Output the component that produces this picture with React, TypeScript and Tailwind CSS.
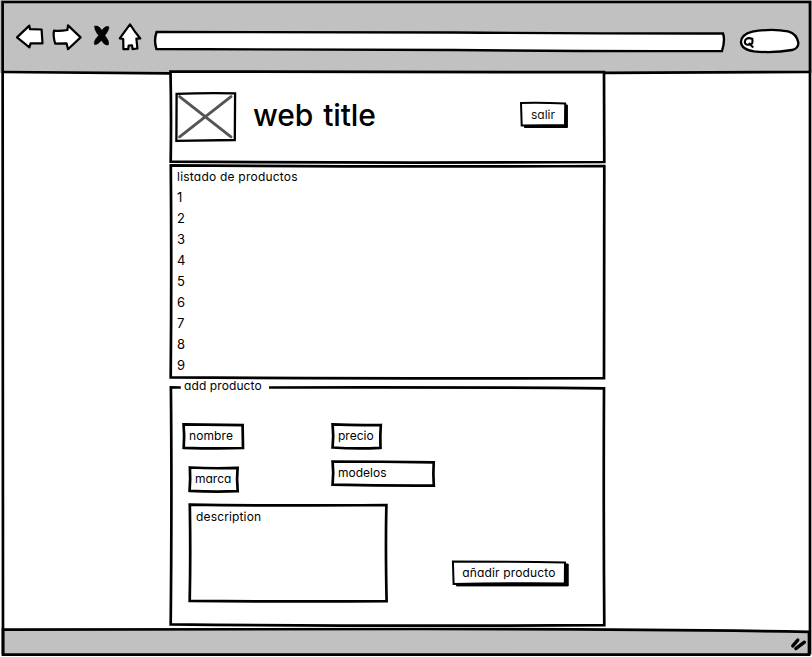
import type { ReactNode } from "react";

/* Hand-drawn outline, stretched over the box that contains it. */
function Outline({ w, h, d, fill = "none", stroke = 2.7 }: { w: number; h: number; d: string; fill?: string; stroke?: number }) {
  return (
    <svg
      className="pointer-events-none absolute inset-0 overflow-visible"
      width={w}
      height={h}
      viewBox={`0 0 ${w} ${h}`}
      fill={fill}
      stroke="#000"
      strokeWidth={stroke}
      strokeLinejoin="miter"
      strokeLinecap="butt"
      aria-hidden="true"
    >
      <path d={d} />
    </svg>
  );
}

function Field({ className, w, h, d, children }: { className: string; w: number; h: number; d: string; children: ReactNode }) {
  return (
    <div className={`relative ${className}`}>
      <Outline w={w} h={h} d={d} />
      <span className="relative">{children}</span>
    </div>
  );
}

function Toolbar() {
  return (
    <header className="relative flex h-[73px] shrink-0 items-start bg-[#c1c1c1]">
      <svg className="shrink-0" width="154" height="72" viewBox="0 0 154 72" fill="#fff" stroke="#000" strokeWidth="2.2" strokeLinejoin="round" strokeLinecap="round">
        <path d="M17 37.4 L29.3 25.6 L30 29.2 L41.6 29.5 L42.5 43.3 L30.6 43.4 L29.4 47.4 Z" />
        <path d="M54 30.6 Q60 31.3 67.4 30 L68 25.4 L80.6 37.4 L68 49.2 L66.6 43.4 L55.2 43.6 Q52.8 36 54 30.6 Z" />
        <path d="M130 24.3 Q134 31 140.3 38.5 L136.4 38.7 L137.4 48.5 L132.6 49.2 L132 45.4 L128.7 45.5 L128.2 49.2 L123.4 49.2 L123.2 39 L119.8 38.4 Q125 31 130 24.3 Z" />
        <path
          d="M94.8 26.2 Q98.6 25 101.9 30.4 Q104.6 26.2 108.2 26.3 Q110.6 28 104.9 35.4 Q109.6 41 108.4 44.8 Q105 45.9 101.4 40.4 Q98 44.4 94.8 44.8 Q92.6 42 98.6 35.4 Q94 29.6 94.8 26.2 Z"
          fill="#000"
          strokeWidth=".6"
        />
      </svg>
      <div className="relative mt-[31px] h-[20px] w-[570px] shrink-0">
        <Outline w={570} h={20} fill="#fff" stroke={2.4} d="M2.6 1 Q150 .6 300 1.5 Q430 2.6 569 2.5 Q571.4 9 568 20 Q420 20.4 300 19 Q150 18.8 2.4 18 Q-.4 9 2.6 1 Z" />
      </div>
      <div className="relative ml-[16px] mt-[29px] h-[24px] w-[60px] shrink-0">
        <Outline
          w={60}
          h={24}
          fill="#fff"
          stroke={2.3}
          d="M12.4 2.6 Q32 -.8 48 2.4 Q57 4.8 58.4 14 Q58.2 19.8 52 21 Q34 24.3 14 22.4 Q1.6 20.8 .9 13.2 Q1.2 5.2 12.4 2.6 Z"
        />
        <Outline w={60} h={24} stroke={2.1} d="M12.2 9.8 Q7.6 8 5.4 10.8 Q3.8 14.8 6.8 15.6 Q11 16.4 12.2 14.2 Q12.8 12 12.2 9 M8.8 14 L13.2 18.4" />
      </div>
      <Outline w={812} h={73} stroke={2.7} d="M3 72 Q90 72.6 170 73.4 M604 72.8 Q700 72.6 809 72" />
    </header>
  );
}

function SiteHeader() {
  return (
    <section className="relative z-10 -mt-[2px] flex h-[91px] items-start bg-white">
      <Outline w={435} h={91} d="M.5 .6 Q210 1.3 434 1.2 L434.3 91 Q215 92.3 .7 90.6 Q1.4 45 .5 .6 Z" />
      <svg className="ml-[5px] mt-[21px] shrink-0" width="62" height="50" viewBox="0 0 62 50" fill="none" stroke="#000" strokeWidth="2.3">
        <path d="M1.6 1.8 Q30 .9 60.1 1.4 L59.8 48 L1.4 48.8 Z" />
        <path d="M4.6 4.6 L56 44.8 M56 4.6 L4.6 44.8" stroke="#555" strokeWidth="2.9" strokeLinecap="round" />
      </svg>
      <h1 className="ml-[16px] mt-[24px] w-[200px] whitespace-nowrap text-[30px] font-medium leading-[40px] tracking-[-0.1px] [word-spacing:2px]">web title</h1>
      <button type="button" className="relative ml-[67px] mt-[31px] h-[24px] w-[46px] text-[12px] leading-[23px] text-[#111]">
        <Outline w={46} h={24} stroke={1} fill="#000" d="M4.5 20 L4.5 25.5 L47.4 25.5 L47.4 3 L45 3 L45 22 Z" />
        <Outline w={46} h={24} stroke={2} fill="#fff" d="M1 .9 Q22 .4 45.2 1.4 L45 23 L1.7 23.5 Z" />
        <span className="relative">salir</span>
      </button>
    </section>
  );
}

const products = [1, 2, 3, 4, 5, 6, 7, 8, 9];

function ProductList() {
  return (
    <section className="relative mt-[3px] h-[213px] bg-white pl-[7px] pt-px text-[12px] leading-[21px]">
      <Outline w={435} h={213} d="M.8 .3 Q210 2 434.3 1 L434 213.2 Q200 213.8 .7 212.4 Q1.7 110 .8 .3 Z" />
      <h2 className="tracking-[0.22px]">listado de productos</h2>
      <ol className="text-[13px]">
        {products.map((n) => (
          <li key={n}>{n}</li>
        ))}
      </ol>
    </section>
  );
}

function AddProduct() {
  return (
    <section className="relative mt-[9px] flex h-[238px] flex-col text-[12px] leading-[24px]">
      <Outline w={435} h={238} d="M10.8 .5 L.9 .4 Q2 110 .7 237.4 Q200 239.4 434.3 238.2 Q433.4 120 434 1.4 Q260 -.2 99 .5" />
      <h2 className="-mt-[13px] ml-[14px] h-[24px] shrink-0 tracking-[0.1px]">add producto</h2>
      <div className="mt-[26px] flex h-[80px] shrink-0 pl-[13px]">
        <div className="flex w-[149px] flex-col gap-[19px]">
          <Field className="h-[24px] w-[60px] pl-[6px] tracking-[0.1px]" w={60} h={24} d="M.6 .4 Q30 .8 59.6 1.2 L60 24 Q35 25 .7 23.8 Q1.6 12 .6 .4 Z">
            nombre
          </Field>
          <Field className="ml-[6px] h-[24px] w-[49px] pl-[6px]" w={49} h={24} d="M.9 .5 Q24 1.8 48.6 .9 Q47.5 12 48.7 24.2 Q25 25.2 .6 23.8 Q1.6 12 .9 .5 Z">
            marca
          </Field>
        </div>
        <div className="flex flex-col gap-[13px]">
          <Field className="h-[24px] w-[49px] pl-[6px]" w={49} h={24} d="M.6 .4 Q24 1.6 48.8 1 Q48 12 48.5 23.8 Q25 25.2 .6 23.5 Q1.8 12 .6 .4 Z">
            precio
          </Field>
          <Field className="h-[25px] w-[102px] pl-[6px]" w={102} h={25} d="M.6 .5 Q50 .7 101.7 1.4 Q101 13 101.8 24.6 Q50 24.8 .6 23.7 Q1.8 12 .6 .5 Z">
            modelos
          </Field>
        </div>
      </div>
      <div className="flex h-[98px] shrink-0 items-end gap-[65px] pl-[19px]">
        <Field className="h-[98px] w-[198px] pl-[7px] pt-px tracking-[0.15px]" w={198} h={98} d="M.8 .7 Q80 2 197.4 1 Q196.4 40 197.6 97.2 Q90 97.8 .7 96.8 Q1.7 50 .8 .7 Z">
          description
        </Field>
        <button type="button" className="relative mb-[17px] h-[24px] w-[114px] text-center leading-[23px] tracking-[0.15px]">
          <Outline w={114} h={24} stroke={1} fill="#000" d="M4.5 20 L4.5 24.9 L116.2 24.9 L116.2 3 L112 3 L112 22 Z" />
          <Outline w={114} h={24} stroke={2} fill="#fff" d="M.9 .5 Q60 .6 113 1.4 L112.8 22.4 Q60 22 1.6 22.9 Z" />
          <span className="relative -top-px whitespace-nowrap">añadir producto</span>
        </button>
      </div>
    </section>
  );
}

export default function App() {
  return (
    <div
      className="relative flex h-[657px] w-[812px] flex-col overflow-hidden bg-white text-black"
      style={{ fontFamily: 'Inter, "Liberation Sans", sans-serif', fontFeatureSettings: '"cv11"' }}
    >
      <Toolbar />
      <main className="ml-[170px] w-[435px] flex-1">
        <SiteHeader />
        <ProductList />
        <AddProduct />
      </main>
      <footer className="relative flex h-[28px] shrink-0 items-start justify-end">
        <Outline w={812} h={28} fill="#c1c1c1" d="M3 .6 Q200 1 420 0 Q640 0 809 2.8 L809 25.6 Q400 24 3 25.6 Z" />
        <svg className="relative mr-[4px] mt-[7px]" width="18" height="16" viewBox="0 0 18 16" stroke="#000" strokeWidth="3.4" strokeLinecap="round">
          <path d="M2.8 9.9 L7.8 4 M5.8 12.6 L14.4 6.2" />
        </svg>
      </footer>
      <Outline w={812} h={657} d="M3 654.5 Q3.6 300 2.6 2 Q400 1.5 810 2 Q809.3 330 810 654.5" />
    </div>
  );
}
